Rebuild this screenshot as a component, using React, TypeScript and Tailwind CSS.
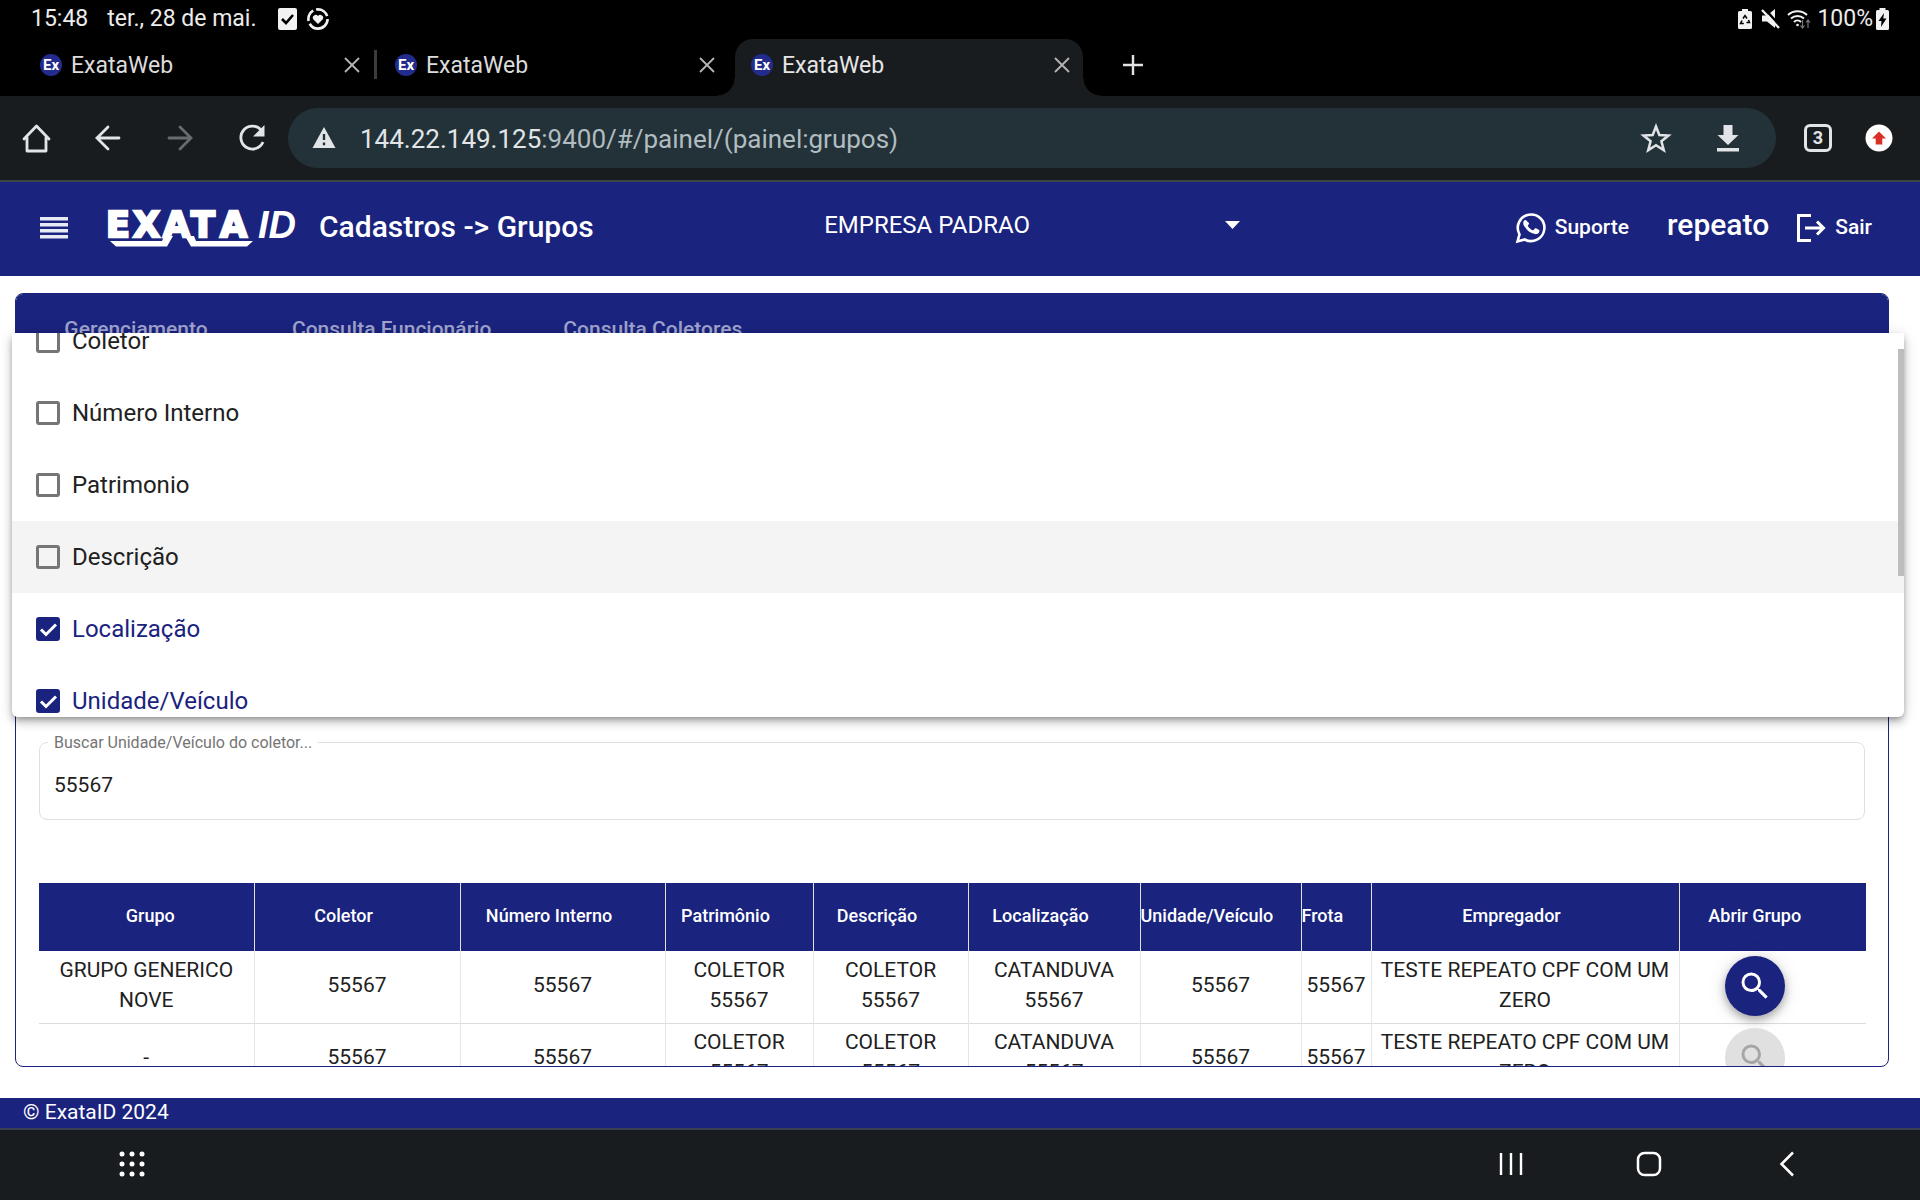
import React from "react";

const tabs = [false, false, true];

function Favicon() {
  return (
    <svg viewBox="0 0 24 24" className="h-6 w-6 shrink-0" aria-hidden="true">
      <circle cx="12" cy="12" r="11" fill="#232b8c" />
      <text x="12" y="17" textAnchor="middle" fontSize="15" fontWeight="700" fontFamily="Roboto, sans-serif" fill="#fff">
        Ex
      </text>
    </svg>
  );
}

function StatusBar() {
  return (
    <div className="flex h-9 items-center justify-between pl-[31px] pr-[31px] pt-0.5 text-[23px] text-[#ececec]">
      <div className="flex items-center">
        <span>15:48</span>
        <span className="ml-[19px]">ter., 28 de mai.</span>
        <svg viewBox="0 0 20 24" className="ml-[22px] h-6 w-5" aria-hidden="true">
          <rect x="0" y="1" width="19" height="22" rx="2" fill="#f2f2f2" />
          <path d="M4 12l4 4 7-8" fill="none" stroke="#000" strokeWidth="2.6" />
        </svg>
        <svg viewBox="0 0 24 24" className="ml-2 h-6 w-6" aria-hidden="true">
          <circle cx="12" cy="12" r="9.6" fill="none" stroke="#f2f2f2" strokeWidth="2.6" strokeDasharray="25 3 12 3 14 3.3" />
          <path d="M12 17l-4.600-4.600a2.800 2.800 0 0 1 4.600-3.300 2.800 2.800 0 0 1 4.600 3.300z" fill="#f2f2f2" />
        </svg>
      </div>
      <div className="flex items-center">
        <svg viewBox="0 0 14 20" className="h-5 w-3.5" aria-hidden="true">
          <path d="M4 0h6v2h2.500a1.500 1.500 0 0 1 1.500 1.500v15a1.500 1.500 0 0 1-1.500 1.500h-11a1.500 1.500 0 0 1-1.500-1.500v-15a1.500 1.500 0 0 1 1.500-1.500h2.500z" fill="#f2f2f2" />
          <path d="M5 9.500l2-3 2 3M10.500 11l1 2.500h-3M5.800 14.500h-3.300l1.500-3" fill="none" stroke="#000" strokeWidth="1.500" />
        </svg>
        <svg viewBox="0 0 20 22" className="ml-[9px] h-[22px] w-5" aria-hidden="true">
          <path d="M1 7.500h5l8-6.500v19l-8-6.500h-5z" fill="#f2f2f2" />
          <path d="M3 0l17 19" stroke="#000" strokeWidth="2.500" />
          <path d="M1 2l17 18" stroke="#f2f2f2" strokeWidth="2.400" />
        </svg>
        <svg viewBox="0 0 24 22" className="ml-1.5 h-[22px] w-6" aria-hidden="true">
          <g fill="none" stroke="#f2f2f2" strokeWidth="2">
            <path d="M1 7a14 14 0 0 1 19 0" />
            <path d="M4 10.500a9.500 9.500 0 0 1 13 0" />
            <path d="M7 14a5 5 0 0 1 7 0" />
          </g>
          <circle cx="10.500" cy="17" r="1.300" fill="#f2f2f2" />
          <path d="M15.500 12v8m-2-2.500l2 2.500 2-2.500M21 20v-8m-2 2.500l2-2.500 2 2.500" fill="none" stroke="#777" strokeWidth="1.200" />
        </svg>
        <span className="ml-1.5">100%</span>
        <svg viewBox="0 0 13 22" className="ml-[3px] h-[22px] w-[13px]" aria-hidden="true">
          <path d="M3.500 0h6v2h2a1.500 1.500 0 0 1 1.500 1.500v17a1.500 1.500 0 0 1-1.500 1.500h-10a1.500 1.500 0 0 1-1.500-1.500v-17a1.500 1.500 0 0 1 1.500-1.500h2z" fill="#f2f2f2" />
          <path d="M8 5l-5.500 8h3l-.5 6 5.500-8.500h-3.200z" fill="#000" />
        </svg>
      </div>
    </div>
  );
}

function CloseIcon() {
  return (
    <svg viewBox="0 0 16 16" className="h-4 w-4" fill="none" stroke="#b5b5b5" strokeWidth="1.800" aria-hidden="true">
      <path d="M1 1l14 14M15 1L1 15" />
    </svg>
  );
}

function TabStrip() {
  return (
    <div className="flex h-[60px] items-end pl-[23px]">
      {tabs.map((active, i) => (
        <div
          key={i}
          className={
            active
              ? "relative ml-0.5 flex h-[57px] w-[348px] items-center rounded-t-[18px] bg-[#191c1f] pb-1.5 pl-[15px] pr-[13px] text-[#e6e6e6]"
              : "relative flex h-[57px] w-[355px] items-center pb-1.5 pl-4 pr-[18px] text-[#dcdcdc]"
          }
        >
          {active && (
            <>
              <span className="absolute -left-[18px] bottom-0 h-[18px] w-[18px] bg-[radial-gradient(circle_at_top_left,transparent_17px,#191c1f_18px)]" />
              <span className="absolute -right-[18px] bottom-0 h-[18px] w-[18px] bg-[radial-gradient(circle_at_top_right,transparent_17px,#191c1f_18px)]" />
            </>
          )}
          <button className="flex flex-1 items-center gap-2 text-left">
            <Favicon />
            <span className="pt-[3px] text-[23px]">ExataWeb</span>
          </button>
          <button aria-label="Fechar guia">
            <CloseIcon />
          </button>
          {i === 0 && <span className="absolute right-px h-[29px] w-[3px] bg-[#3a3d40]" />}
        </div>
      ))}
      <button aria-label="Nova guia" className="ml-10 flex h-[57px] items-center pb-1.5">
        <svg viewBox="0 0 20 20" className="h-5 w-5" stroke="#e3e3e3" strokeWidth="2.400" aria-hidden="true">
          <path d="M10 0v20M0 10h20" />
        </svg>
      </button>
    </div>
  );
}

function Toolbar() {
  return (
    <div className="flex h-[86px] items-center border-b-2 border-[#3c4647] bg-[#191c1f] pl-5 pr-[27px]">
      <button aria-label="Início">
        <svg viewBox="0 0 32 32" className="h-8 w-8" fill="none" stroke="#e1e5e7" strokeWidth="2.800" strokeLinejoin="round" strokeLinecap="round" aria-hidden="true">
          <path d="M4 17L16.500 4 29 17M7 15.500V29h19V15.500" />
        </svg>
      </button>
      <button aria-label="Voltar" className="ml-10">
        <svg viewBox="0 0 32 32" className="h-8 w-8" fill="none" stroke="#e1e5e7" strokeWidth="2.800" strokeLinecap="round" aria-hidden="true">
          <path d="M27 16H5M16 5L5 16l11 11" />
        </svg>
      </button>
      <button aria-label="Avançar" className="ml-10" disabled>
        <svg viewBox="0 0 32 32" className="h-8 w-8" fill="none" stroke="#696c6e" strokeWidth="2.800" strokeLinecap="round" aria-hidden="true">
          <path d="M5 16h22M16 5l11 11-11 11" />
        </svg>
      </button>
      <button aria-label="Recarregar" className="ml-10">
        <svg viewBox="0 0 32 32" className="h-8 w-8" aria-hidden="true">
          <path d="M25.500 8.500A11.500 11.500 0 1 0 27 20" fill="none" stroke="#e1e5e7" strokeWidth="2.800" />
          <path d="M28.500 3v11.500h-11.500z" fill="#e1e5e7" />
        </svg>
      </button>
      <div className="ml-5 flex h-[60px] flex-1 items-center rounded-full bg-[#233238] pl-6 pr-8">
        <svg viewBox="0 0 24 24" className="h-6 w-6" aria-hidden="true">
          <path d="M12 1l11.500 21H.5z" fill="#e1e5e7" />
          <path d="M12 8v6M12 16.500v2.800" stroke="#233238" strokeWidth="2.400" />
        </svg>
        <div className="ml-6 flex-1 pt-0.5 text-[26px] text-[#e1e5e7]">
          144.22.149.125<span className="text-[#b0bcc0]">:9400/#/painel/(painel:grupos)</span>
        </div>
        <button aria-label="Favoritar">
          <svg viewBox="0 0 32 32" className="h-8 w-8" fill="none" stroke="#e1e5e7" strokeWidth="2.500" aria-hidden="true">
            <path d="M16 4.500l3.300 8.500 9.200.5-7.100 5.800 2.400 9L16 23.300l-7.800 5 2.400-9-7.100-5.800 9.200-.5z" />
          </svg>
        </button>
        <button aria-label="Baixar" className="ml-10">
          <svg viewBox="0 0 32 32" className="h-8 w-8" fill="#e1e5e7" aria-hidden="true">
            <path d="M11.500 3h9v10h6L16 23 5.500 13h6zM5 26h22v3.500H5z" />
          </svg>
        </button>
      </div>
      <button aria-label="Guias abertas" className="ml-7 flex h-7 w-7 items-center justify-center rounded-md border-[3px] border-[#e1e5e7] text-lg font-bold text-[#e1e5e7]">
        3
      </button>
      <button aria-label="Atualizar" className="ml-[33px]">
        <svg viewBox="0 0 28 28" className="h-7 w-7" aria-hidden="true">
          <circle cx="14" cy="14" r="13.500" fill="#fff" />
          <path d="M14 7.500l7 7h-3.700v6h-6.600v-6H7z" fill="#d93025" />
        </svg>
      </button>
    </div>
  );
}

function Logo() {
  return (
    <svg viewBox="0 0 190 40" className="h-10 w-[190px]" fill="#fff" role="img" aria-label="EXATA ID">
      <text x="-1 26 56 84 113" y="29" fontFamily="DejaVu Sans, sans-serif" fontWeight="700" fontSize="35" stroke="#fff" strokeWidth="2.400">
        EXATA
      </text>
      <text x="151" y="30" fontFamily="Liberation Sans, sans-serif" fontWeight="700" fontStyle="italic" fontSize="38">
        ID
      </text>
      <path d="M3 33H55l2-5h9L60 38.500H9zM78 28h9l2 5h57l-6 5.500H84z" />
    </svg>
  );
}

function AppHeader() {
  return (
    <header className="flex h-[94px] items-center bg-[#1a237e] pb-[3px] pl-10 pr-12 text-white">
      <button aria-label="Menu">
        <svg viewBox="0 0 28 22" className="h-[22px] w-7" fill="#e8eaf6" aria-hidden="true">
          <path d="M0 0h28v3.500H0zM0 6h28v3.500H0zM0 12h28v3.500H0zM0 18h28v3.500H0z" />
        </svg>
      </button>
      <div className="ml-[39px]">
        <Logo />
      </div>
      <h1 className="ml-[22px] pb-0.5 text-3xl font-medium">Cadastros -&gt; Grupos</h1>
      <div className="flex flex-1 justify-center pb-1.5 pr-11">
        <label className="relative flex w-[416px] items-center">
          <span className="sr-only">Empresa</span>
          <select className="w-full appearance-none bg-transparent text-2xl outline-none">
            <option>EMPRESA PADRAO</option>
          </select>
          <svg viewBox="0 0 15 8" className="pointer-events-none absolute right-0 h-2 w-[15px]" fill="#fff" aria-hidden="true">
            <path d="M0 0h15L7.500 8z" />
          </svg>
        </label>
      </div>
      <a href="#suporte" className="flex items-center gap-2 text-[21px] font-medium">
        <svg viewBox="0 0 32 32" className="h-8 w-8" aria-hidden="true">
          <path d="M2.500 29.500l2-7.200A13.300 13.300 0 1 1 9.800 27.500z" fill="none" stroke="#fff" strokeWidth="2.600" />
          <path d="M11.600 8.500c-.5-1-1-.9-1.500-.9-.9 0-2.300 1.300-2.300 3.500s1.700 4.400 2 4.700c.2.300 3.200 5.100 7.900 7 3.900 1.500 4.700 1.200 5.500 1.100.9-.1 2.700-1.100 3.100-2.200.4-1.100.4-2 .3-2.200-.4-.6-3.700-2.200-4.300-2.300-.4-.1-.7-.1-1 .3-.3.500-1.200 1.500-1.500 1.800-.3.300-.6.300-1 .1-2.700-1.200-4.600-3.300-5.600-5-.3-.5.600-1 1.400-2.600.1-.3 0-.6-.1-.8z" fill="#fff" transform="translate(1.500 1.500) scale(.86)" />
        </svg>
        Suporte
      </a>
      <span className="ml-[38px] pb-1.5 text-3xl font-medium">repeato</span>
      <button className="ml-[26px] flex items-center gap-2 text-[21px] font-medium">
        <svg viewBox="0 0 32 32" className="h-8 w-8" fill="none" stroke="#fff" strokeWidth="3" aria-hidden="true">
          <path d="M16 3.500H3.500v25H16M10 16h18M22 9.500l6.500 6.500-6.500 6.500" />
        </svg>
        Sair
      </button>
    </header>
  );
}

const options = [
  { label: "Coletor" },
  { label: "Número Interno" },
  { label: "Patrimonio" },
  { label: "Descrição", hover: true },
  { label: "Localização", checked: true },
  { label: "Unidade/Veículo", checked: true },
];

function OptionsPanel() {
  return (
    <div className="absolute left-3 right-4 top-[57px] h-96 overflow-hidden rounded-b-md bg-white shadow-[0_3px_6px_-2px_rgba(0,0,0,0.35),0_6px_8px_rgba(0,0,0,0.14),0_2px_15px_rgba(0,0,0,0.14)]">
      <div className="-mt-7">
        {options.map((o) => (
          <label
            key={o.label}
            className={
              "flex h-[72px] items-center gap-3 px-6 text-2xl " +
              (o.hover ? "bg-[#f4f4f4] " : "") +
              (o.checked ? "text-[#1a237e]" : "text-[#212121]")
            }
          >
            <span className="relative flex h-6 w-6">
              <input
                type="checkbox"
                defaultChecked={o.checked}
                className="h-6 w-6 appearance-none rounded-[3px] border-[3px] border-[#757575] checked:border-[#1a237e] checked:bg-[#1a237e]"
              />
              {o.checked && (
                <svg viewBox="0 0 24 24" className="pointer-events-none absolute inset-0 h-6 w-6" fill="none" stroke="#fff" strokeWidth="3" aria-hidden="true">
                  <path d="M5 12.500l5 5L20 7.500" />
                </svg>
              )}
            </span>
            {o.label}
          </label>
        ))}
      </div>
      <div className="absolute right-0 top-4 h-[227px] w-1.5 bg-[#bdbdbd]" />
    </div>
  );
}

const columns = [
  { name: "Grupo", width: 215, pad: "pl-9 pr-7 text-center" },
  { name: "Coletor", width: 206, pad: "pr-[27px] text-center" },
  { name: "Número Interno", width: 205, pad: "pr-[27px] text-center" },
  { name: "Patrimônio", width: 148, pad: "pr-[27px] text-center" },
  { name: "Descrição", width: 155, pad: "pr-[27px] text-center" },
  { name: "Localização", width: 172, pad: "pr-[27px] text-center" },
  { name: "Unidade/Veículo", width: 161, pad: "text-left" },
  { name: "Frota", width: 70, pad: "text-left" },
  { name: "Empregador", width: 308, pad: "pr-[27px] text-center" },
  { name: "Abrir Grupo", width: 187, pad: "pr-9 text-center" },
];

const rows = [
  { group: "GRUPO GENERICO NOVE", enabled: true },
  { group: "-", enabled: false },
];

const rest = ["55567", "55567", "COLETOR 55567", "COLETOR 55567", "CATANDUVA 55567", "55567", "55567", "TESTE REPEATO CPF COM UM ZERO"];

function GroupTable() {
  return (
    <table className="mt-[63px] w-full table-fixed border-collapse">
      <colgroup>
        {columns.map((c) => (
          <col key={c.name} style={{ width: c.width }} />
        ))}
      </colgroup>
      <thead>
        <tr className="h-[68px] bg-[#1a237e] text-lg font-medium text-white">
          {columns.map((c) => (
            <th key={c.name} className={"whitespace-nowrap border-r border-[#e0e0e0] pb-0.5 font-medium last:border-r-0 " + c.pad}>
              {c.name}
            </th>
          ))}
        </tr>
      </thead>
      <tbody>
        {rows.map((r) => (
          <tr key={r.group} className="h-[72px] border-b border-[#dcdcdc] text-center text-[21px] leading-[30px] text-[#212121]">
            <td className="border-r border-[#e6e6e6] px-4 pb-1">{r.group}</td>
            {rest.map((t, i) => (
              <td key={i} className="border-r border-[#e6e6e6] px-1 pb-1">
                {t}
              </td>
            ))}
            <td className="pb-0.5 pr-9">
              <button
                aria-label="Abrir grupo"
                disabled={!r.enabled}
                className={
                  "inline-flex h-[60px] w-[60px] items-center justify-center rounded-full align-middle " +
                  (r.enabled
                    ? "bg-[#1a237e] text-white shadow-[0_4px_8px_rgba(0,0,0,0.3),0_2px_20px_rgba(0,0,0,0.12)]"
                    : "bg-[#e0e0e0] text-[#a6a6a6]")
                }
              >
                <svg viewBox="0 0 24 24" className="h-9 w-9" fill="currentColor" aria-hidden="true">
                  <path d="M15.500 14h-.79l-.28-.27A6.471 6.471 0 0 0 16 9.500 6.500 6.500 0 1 0 9.500 16c1.610 0 3.090-.59 4.230-1.570l.27.28v.79l5 4.990L20.490 19l-4.990-5zm-6 0C7.010 14 5 11.990 5 9.500S7.010 5 9.500 5 14 7.010 14 9.500 11.990 14 9.500 14z" />
                </svg>
              </button>
            </td>
          </tr>
        ))}
      </tbody>
    </table>
  );
}

export default function App() {
  return (
    <div className="flex h-screen flex-col overflow-hidden bg-black font-['Roboto',sans-serif]">
      <StatusBar />
      <TabStrip />
      <Toolbar />
      <AppHeader />
      <main className="relative min-h-0 flex-1 bg-white pb-[31px] pl-[15px] pr-[31px] pt-[17px]">
        <section className="h-full overflow-hidden rounded-lg border border-[#1a237e]">
          <nav className="flex h-[72px] bg-[#1a237e] text-[21px] font-medium text-[#9fa3cd]">
            <button className="min-w-60 px-9">Gerenciamento</button>
            <button className="min-w-60 px-9">Consulta Funcionário</button>
            <button className="min-w-60 px-9">Consulta Coletores</button>
          </nav>
          <div className="px-[23px] pt-[366px]">
            <fieldset className="h-[88px] rounded-lg border border-[#e0e0e0] pl-[14px]">
              <legend className="-ml-1.5 h-5 px-1.5 pt-px text-base leading-5 text-[#757575]">
                <label htmlFor="busca">Buscar Unidade/Veículo do coletor...</label>
              </legend>
              <input id="busca" defaultValue="55567" className="mt-[18px] w-full bg-transparent text-[21px] text-[#212121] outline-none" />
            </fieldset>
            <GroupTable />
          </div>
        </section>
        <OptionsPanel />
      </main>
      <footer className="flex h-[30px] items-center bg-[#1a237e] pl-[23px] text-[21px] text-white">© ExataID 2024</footer>
      <nav className="flex h-[72px] items-center border-t-2 border-[#3a3f52] bg-[#191c1f] pb-0.5 pl-[119px] pr-[119px]">
        <button aria-label="Aplicativos">
          <svg viewBox="0 0 26 26" className="h-[26px] w-[26px]" fill="#fff" aria-hidden="true">
            {[3, 13, 23].map((y) => [3, 13, 23].map((x) => <circle key={x + "-" + y} cx={x} cy={y} r="2.500" />))}
          </svg>
        </button>
        <div className="ml-auto flex items-center gap-[110px]">
          <button aria-label="Recentes">
            <svg viewBox="0 0 28 28" className="h-7 w-7" stroke="#fff" strokeWidth="2.400" aria-hidden="true">
              <path d="M4 3v22M14 3v22M24 3v22" />
            </svg>
          </button>
          <button aria-label="Tela inicial">
            <svg viewBox="0 0 28 28" className="h-7 w-7" fill="none" stroke="#fff" strokeWidth="2.500" aria-hidden="true">
              <rect x="3" y="3" width="22" height="22" rx="6.500" />
            </svg>
          </button>
          <button aria-label="Voltar">
            <svg viewBox="0 0 28 28" className="h-7 w-7" fill="none" stroke="#fff" strokeWidth="2.500" aria-hidden="true">
              <path d="M20 2.500L8.500 14 20 25.500" />
            </svg>
          </button>
        </div>
      </nav>
    </div>
  );
}
